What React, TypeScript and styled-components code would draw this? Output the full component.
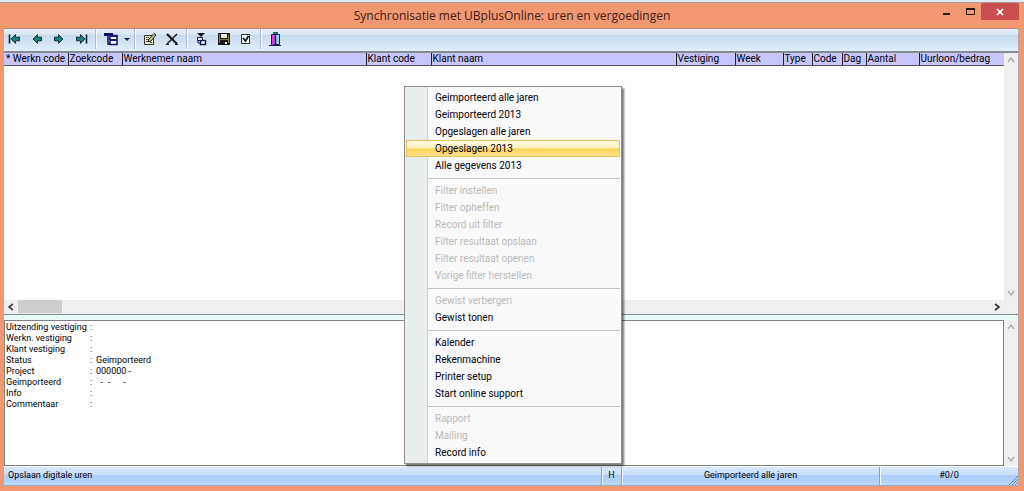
import React from "react";
import styled, { createGlobalStyle } from "styled-components";

const GlobalStyle = createGlobalStyle`
  * { box-sizing: border-box; }
  body { margin: 0; }
  button { font: inherit; color: inherit; border: 0; padding: 0; background: none; }
`;

const Screen = styled.div`
  position: relative;
  min-height: 100vh;
  display: flex;
  flex-direction: column;
  background: #f19871;
  color: #000008;
  font: 9px/11px Roboto, "Liberation Sans", sans-serif;
`;

const BackEdge = styled.div`
  height: 3px;
  flex: none;
  background: #e3e9f0;
  border-bottom: 1px solid #b09a98;
`;

const TitleBar = styled.header`
  position: relative;
  display: flex;
  justify-content: center;
  height: 25px;
  flex: none;
`;

const Title = styled.h1`
  margin: 0;
  font: 400 12px/25px "Open Sans", "Noto Sans", sans-serif;
  color: #3c2018;
`;

const WindowControls = styled.div`
  position: absolute;
  top: 0;
  right: 5px;
  display: flex;
`;

const WindowButton = styled.button<{ $close?: boolean }>`
  display: grid;
  place-items: center;
  width: ${(p) => (p.$close ? 38 : 23)}px;
  height: 17px;
  background: ${(p) => (p.$close ? "#c9504f" : "transparent")};
`;

const Content = styled.main`
  flex: 1;
  display: flex;
  flex-direction: column;
  margin: 0 5px 5px 4px;
  border-top: 1px solid #b98f80;
  border-right: 1px solid #b5a8a8;
`;

const Toolbar = styled.div`
  display: flex;
  align-items: flex-start;
  height: 22px;
  flex: none;
  background: linear-gradient(#e6effa 0, #dbe7f5 24%, #c9daed 28%, #d3e3f4 60%, #e2effc 100%);
`;

const ToolButton = styled.button<{ $narrow?: boolean }>`
  display: grid;
  place-items: center;
  width: ${(p) => (p.$narrow ? 9 : 22)}px;
  height: 20px;
`;

const ToolDivider = styled.span`
  width: 2px;
  height: 20px;
  margin: 0 3px;
  background: #b2bdca;
  border-right: 1px solid #f6faff;
`;

const GridArea = styled.section`
  flex: 262 1 0;
  display: flex;
  border-top: 2px solid #848a8e;
  background: #fff;
  min-height: 0;
`;

const GridMain = styled.div`
  flex: 1;
  min-width: 0;
  display: flex;
  flex-direction: column;
`;

const GridTable = styled.table`
  width: 100%;
  table-layout: fixed;
  border-collapse: collapse;
  margin-bottom: auto;
`;

const HeadCell = styled.th<{ $width?: number }>`
  width: ${(p) => (p.$width ? `${p.$width}px` : "auto")};
  height: 12px;
  padding: 1px 0 0 1px;
  overflow: hidden;
  white-space: nowrap;
  text-align: left;
  font-size: 10px;
  font-weight: 400;
  line-height: 10px;
  background: #c6c6fb;
  border-bottom: 1px solid #55555f;
  border-left: 1px solid #202030;

  &:first-child { border-left: 0; padding-left: 2px; }
`;

const VScroll = styled.div<{ $corner?: boolean }>`
  width: 14px;
  flex: none;
  display: flex;
  flex-direction: column;
  justify-content: space-between;
  padding-bottom: ${(p) => (p.$corner ? 14 : 0)}px;
  background: #efefef;
`;

const HScroll = styled.div`
  height: 14px;
  display: flex;
  align-items: center;
  background: #efefef;
`;

const ScrollButton = styled.button`
  display: grid;
  place-items: center;
  width: 14px;
  height: 14px;
`;

const Thumb = styled.span`
  width: 44px;
  height: 13px;
  margin-right: auto;
  background: #cdcdcd;
`;

const Splitter = styled.div`
  height: 6px;
  flex: none;
  background: #e8fafa;
  border-top: 1px solid #7d8c8c;
`;

const DetailArea = styled.section`
  flex: 147 1 0;
  display: flex;
  background: #fff;
`;

const DetailList = styled.dl`
  flex: 1;
  margin: 0;
  padding: 1px;
  border: 1px solid #7d8483;
  display: grid;
  grid-template-columns: 84px 6px 1fr;
  grid-auto-rows: 11px;
  align-content: start;
  white-space: pre;

  dt, dd { margin: 0; }
`;

const StatusBar = styled.footer`
  height: 20px;
  flex: none;
  display: grid;
  grid-template-columns: 1fr 20px 258px 139px;
  border-top: 1px solid #fff;
  border-bottom: 1px solid #9eabc0;
  background: linear-gradient(#d9e9fd 0, #c6defb 42%, #aacdf8 48%, #b9d8fc 100%);
`;

const StatusCell = styled.div<{ $align?: "left" | "center" }>`
  position: relative;
  padding: 0 4px;
  line-height: 17px;
  text-align: ${(p) => p.$align ?? "center"};

  & + & {
    border-left: 1px solid #8f9db2;
    box-shadow: inset 1px 0 #f1f7ff;
  }
`;

const Grip = styled.svg`
  position: absolute;
  right: 0;
  bottom: 0;
`;

const Menu = styled.div`
  position: absolute;
  left: 404px;
  top: 86px;
  width: 218px;
  padding: 2px 1px;
  border: 1px solid #8e8e8e;
  background: linear-gradient(to right, #e7eeed 22px, #c9d1d0 22px, #c9d1d0 23px, #fafafa 23px);
  box-shadow: 2px 2px 2px rgba(0, 0, 0, 0.55);
  font: 10px/15px Roboto, "Open Sans", sans-serif;
`;

const MenuItem = styled.button<{ $active?: boolean }>`
  display: block;
  width: 100%;
  height: 17px;
  padding: 0 0 0 28px;
  text-align: left;
  white-space: nowrap;
  border: 1px solid ${(p) => (p.$active ? "#e5c365" : "transparent")};
  background: ${(p) =>
    p.$active ? "linear-gradient(#fffbea 0, #fdeeb8 46%, #fbd45c 54%, #fde08a 100%)" : "none"};

  &:disabled { color: #b9b9b9; }
`;

const MenuLine = styled.hr`
  height: 1px;
  margin: 4px 0 3px 22px;
  border: 0;
  background: #c3c3c3;
`;

type IconProps = { children: React.ReactNode; size?: number };
const Icon = ({ children, size = 16 }: IconProps) => (
  <svg width={size} height={size} viewBox={`0 0 ${size} ${size}`} aria-hidden="true">
    {children}
  </svg>
);

const Arrow = ({ right, bar }: { right?: boolean; bar?: boolean }) => (
  <Icon>
    <g transform={right ? "translate(16 0) scale(-1 1)" : undefined}>
      {bar && <path d="M2.500 3.500v9" stroke="#0c1c30" strokeWidth="1.600" />}
      <path d="M4 8l4.500-4.300v2.500h4v3.600h-4v2.500z" fill="#16847c" stroke="#102c38" />
    </g>
  </Icon>
);

const Chevron = ({ d, color }: { d: string; color: string }) => (
  <Icon size={8}>
    <path d={d} fill="none" stroke={color} strokeWidth="1.6" />
  </Icon>
);
const UP = "M1 6l3-4 3 4";
const DOWN = "M1 2l3 4 3-4";

const TreeIcon = () => (
  <Icon>
    <path d="M1 2h9v3H1z" fill="#10105c" />
    <path d="M5 5v8h2M5 8h3" fill="none" stroke="#10105c" strokeWidth="1.500" />
    <path d="M7 4.500h7v9H7z" fill="#fff" stroke="#10105c" strokeWidth="1.500" />
    <path d="M7 4h7v2H7zM7 8h7v2H7z" fill="#15157a" />
  </Icon>
);
const EditIcon = () => (
  <Icon>
    <path d="M2.500 4.500h9v9h-9z" fill="#eeeed2" stroke="#35352c" />
    <path d="M4 6.500h3M4 8.500h3M4 10.500h2M8 11.500h2" stroke="#55554a" />
    <path d="M6 11l1-3 5-5.500 2 1.500-5 6z" fill="#c4c48a" stroke="#25251c" />
  </Icon>
);
const DeleteIcon = () => (
  <Icon>
    <path d="M3 3l10 10" stroke="#17171c" strokeWidth="2.200" />
    <path d="M13 3L3 13" stroke="#17171c" strokeWidth="1.500" />
    <path d="M2 13.500h3M11 13.500h3" stroke="#17171c" />
  </Icon>
);
const TransferIcon = () => (
  <Icon>
    <path d="M3 2h8L7 6z" fill="#141430" />
    <path d="M3.500 6.500h5v3h-5z" fill="#fff" stroke="#141450" />
    <path d="M6.500 9.500h5v4h-5z" fill="#fff" stroke="#141450" strokeWidth="1.400" />
    <path d="M4 9v3h2" fill="none" stroke="#141450" />
  </Icon>
);
const SaveIcon = () => (
  <Icon>
    <path d="M2 2h12v12H2z" fill="#1a1a1c" />
    <path d="M3 3h1v9H3zM12 4h1v8h-1z" fill="#8a8a3c" />
    <path d="M5 3h6v4H5z" fill="#e6e6de" />
    <path d="M4 8h8v1H4z" fill="#77773a" />
    <path d="M9 11h2v2H9z" fill="#e6e6de" />
  </Icon>
);
const CheckIcon = () => (
  <Icon>
    <path d="M3.500 3.500h8v9h-8z" fill="#fff" stroke="#33333a" />
    <path d="M5 7l2.500 3L10.500 5" fill="none" stroke="#111" strokeWidth="1.800" />
  </Icon>
);
const DoorIcon = () => (
  <Icon>
    <path d="M5 1h5v2H5z" fill="#1f6b5c" />
    <path d="M3.500 3.500h8v10h-8z" fill="#8fd8ee" stroke="#14147a" />
    <path d="M4 4h3v9l-3 1z" fill="#e43be0" />
    <path d="M7.500 4v10" stroke="#14147a" strokeWidth="1.400" />
    <path d="M1 14.500h12" stroke="#1c1c50" />
  </Icon>
);

const columns: [string, number?][] = [
  ["* Werkn code", 64],
  ["Zoekcode", 54],
  ["Werknemer naam", 244],
  ["Klant code", 65],
  ["Klant naam"],
  ["Vestiging", 59],
  ["Week", 48],
  ["Type", 29],
  ["Code", 30],
  ["Dag", 24],
  ["Aantal", 53],
  ["Uurloon/bedrag", 85],
];

const details: [string, string][] = [
  ["Uitzending vestiging", ""],
  ["Werkn. vestiging", ""],
  ["Klant vestiging", ""],
  ["Status", "Geimporteerd"],
  ["Project", "000000 -"],
  ["Geimporteerd", "  -  -      -"],
  ["Info", ""],
  ["Commentaar", ""],
];

type Entry = { label: string; disabled?: boolean; active?: boolean };
const off = (label: string): Entry => ({ label, disabled: true });
const on = (label: string): Entry => ({ label });
const menuGroups: Entry[][] = [
  [
    on("Geimporteerd alle jaren"),
    on("Geimporteerd 2013"),
    on("Opgeslagen alle jaren"),
    { label: "Opgeslagen 2013", active: true },
    on("Alle gegevens 2013"),
  ],
  [
    off("Filter instellen"),
    off("Filter opheffen"),
    off("Record uit filter"),
    off("Filter resultaat opslaan"),
    off("Filter resultaat openen"),
    off("Vorige filter herstellen"),
  ],
  [off("Gewist verbergen"), on("Gewist tonen")],
  [on("Kalender"), on("Rekenmachine"), on("Printer setup"), on("Start online support")],
  [off("Rapport"), off("Mailing"), on("Record info")],
];

const VerticalScroll = ({ corner }: { corner?: boolean }) => (
  <VScroll $corner={corner}>
    <ScrollButton aria-label="Omhoog"><Chevron d={UP} color="#b4b4b4" /></ScrollButton>
    <ScrollButton aria-label="Omlaag"><Chevron d={DOWN} color="#b4b4b4" /></ScrollButton>
  </VScroll>
);

export default function App() {
  return (
    <Screen>
      <GlobalStyle />
      <BackEdge />
      <TitleBar>
        <Title>Synchronisatie met UBplusOnline: uren en vergoedingen</Title>
        <WindowControls>
          <WindowButton aria-label="Minimaliseren">
            <Icon size={10}><path d="M1 6h7v2H1z" fill="#2a1a14" /></Icon>
          </WindowButton>
          <WindowButton aria-label="Maximaliseren">
            <Icon size={10}>
              <path d="M1.500 1.500h8v6h-8z" fill="none" stroke="#2a1a14" />
              <path d="M1 1h9v2H1z" fill="#2a1a14" />
            </Icon>
          </WindowButton>
          <WindowButton $close aria-label="Sluiten">
            <Icon size={10}><path d="M2 2l6 6M8 2L2 8" stroke="#fff" strokeWidth="1.700" /></Icon>
          </WindowButton>
        </WindowControls>
      </TitleBar>
      <Content>
        <Toolbar role="toolbar">
          <ToolButton aria-label="Eerste"><Arrow bar /></ToolButton>
          <ToolButton aria-label="Vorige"><Arrow /></ToolButton>
          <ToolButton aria-label="Volgende"><Arrow right /></ToolButton>
          <ToolButton aria-label="Laatste"><Arrow right bar /></ToolButton>
          <ToolDivider />
          <ToolButton aria-label="Structuur"><TreeIcon /></ToolButton>
          <ToolButton $narrow aria-label="Meer">
            <Icon size={6}><path d="M0 2h6L3 5z" fill="#14284a" /></Icon>
          </ToolButton>
          <ToolDivider />
          <ToolButton aria-label="Bewerken"><EditIcon /></ToolButton>
          <ToolButton aria-label="Verwijderen"><DeleteIcon /></ToolButton>
          <ToolDivider />
          <ToolButton aria-label="Importeren"><TransferIcon /></ToolButton>
          <ToolButton aria-label="Opslaan"><SaveIcon /></ToolButton>
          <ToolButton aria-label="Selecteren"><CheckIcon /></ToolButton>
          <ToolDivider />
          <ToolButton aria-label="Afsluiten"><DoorIcon /></ToolButton>
        </Toolbar>
        <GridArea>
          <GridMain>
            <GridTable>
              <thead>
                <tr>
                  {columns.map(([name, width]) => (
                    <HeadCell key={name} $width={width}>{name}</HeadCell>
                  ))}
                </tr>
              </thead>
            </GridTable>
            <HScroll>
              <ScrollButton aria-label="Links"><Chevron d="M6 1L2 4l4 3" color="#444" /></ScrollButton>
              <Thumb />
              <ScrollButton aria-label="Rechts"><Chevron d="M2 1l4 3-4 3" color="#333" /></ScrollButton>
            </HScroll>
          </GridMain>
          <VerticalScroll corner />
        </GridArea>
        <Splitter />
        <DetailArea>
          <DetailList>
            {details.map(([name, value]) => (
              <React.Fragment key={name}>
                <dt>{name}</dt>
                <span>:</span>
                <dd>{value}</dd>
              </React.Fragment>
            ))}
          </DetailList>
          <VerticalScroll />
        </DetailArea>
        <StatusBar>
          <StatusCell $align="left">Opslaan digitale uren</StatusCell>
          <StatusCell>H</StatusCell>
          <StatusCell>Geimporteerd alle jaren</StatusCell>
          <StatusCell>
            #0/0
            <Grip width="10" height="10" aria-hidden="true">
              <path d="M1 10l9-9M4 10l6-6M7 10l3-3" stroke="#7186a6" />
            </Grip>
          </StatusCell>
        </StatusBar>
      </Content>
      <Menu role="menu">
        {menuGroups.map((group, i) => (
          <React.Fragment key={i}>
            {i > 0 && <MenuLine />}
            {group.map((item) => (
              <MenuItem key={item.label} role="menuitem" disabled={item.disabled} $active={item.active}>
                {item.label}
              </MenuItem>
            ))}
          </React.Fragment>
        ))}
      </Menu>
    </Screen>
  );
}
